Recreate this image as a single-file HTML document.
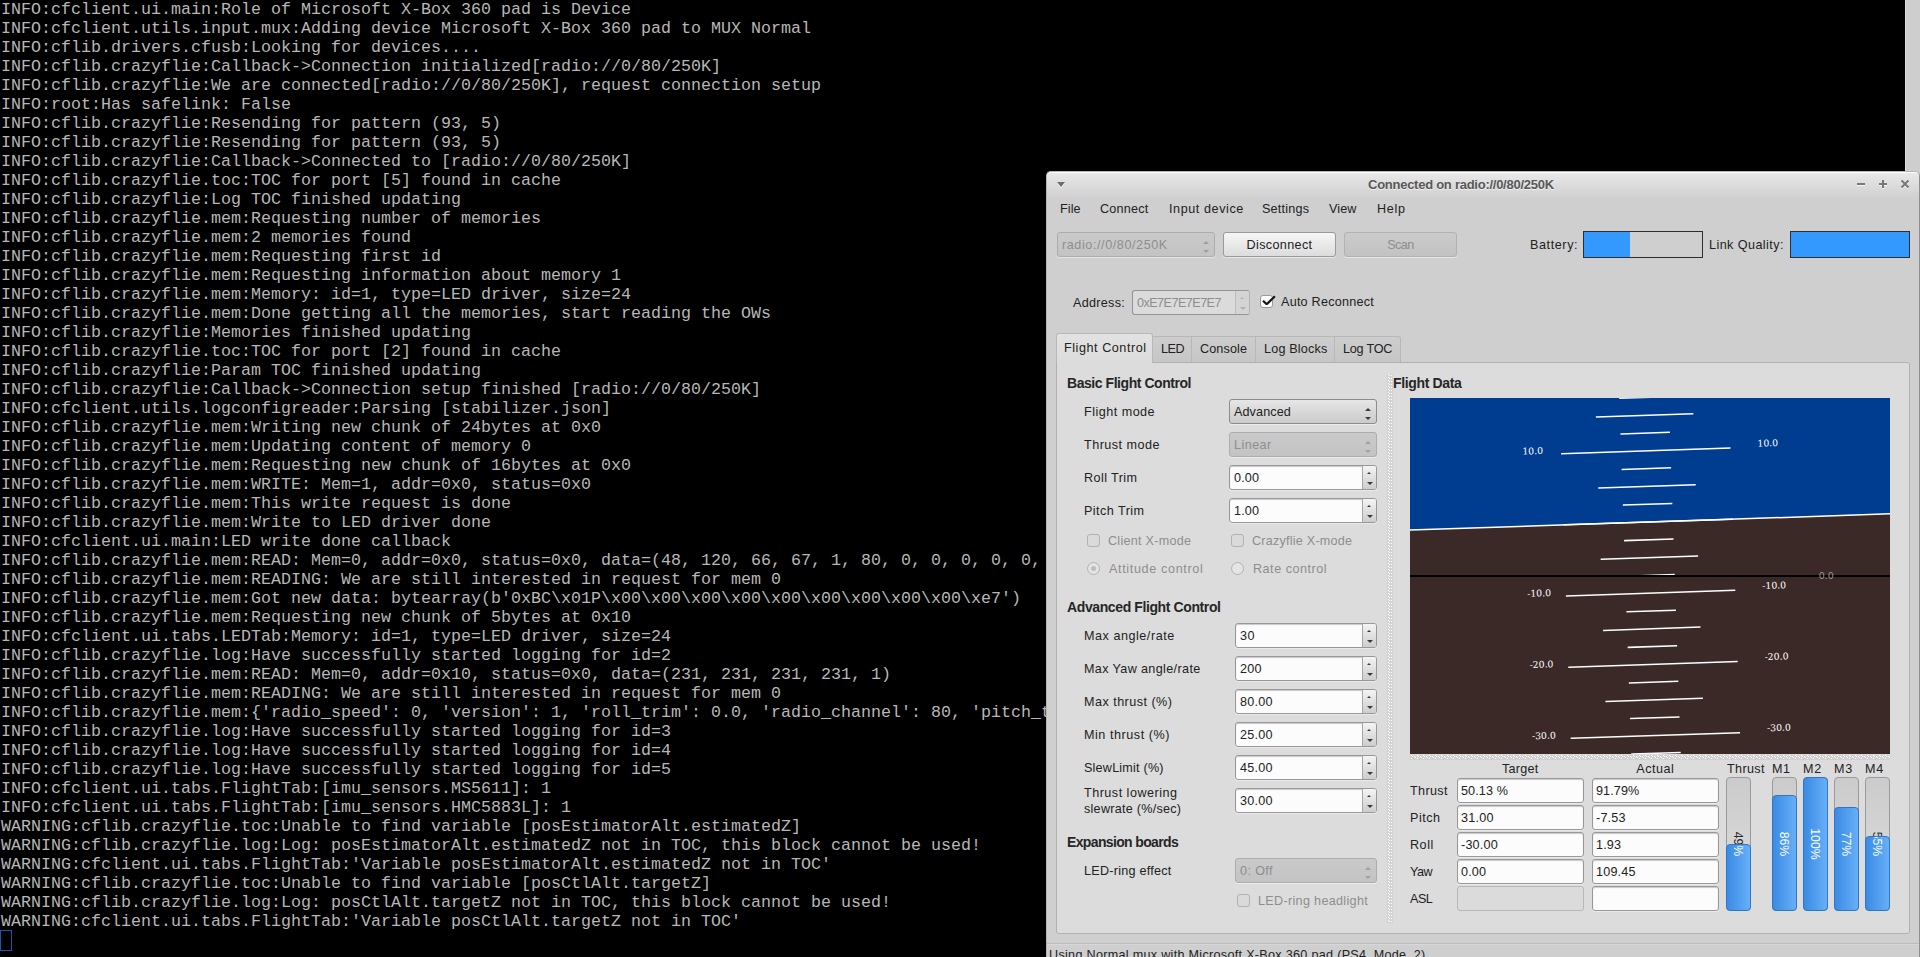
<!DOCTYPE html>
<html><head><meta charset="utf-8"><title>cfclient</title>
<style>
*{box-sizing:border-box;margin:0;padding:0}
html,body{width:1920px;height:957px;overflow:hidden;background:#000}
body{position:relative;font-family:"Liberation Sans",sans-serif;font-size:12.6px;letter-spacing:.4px;color:#222}
#term{position:absolute;left:0;top:0;width:1905px;height:957px;background:#000;overflow:hidden;letter-spacing:.004px;
 font-family:"Liberation Mono",monospace;font-size:16.667px;line-height:19px;color:#b7b7b7;white-space:pre}
#term pre{position:absolute;left:1px;top:0px;font:inherit;line-height:inherit}
#cursor{position:absolute;left:0;top:930px;width:12px;height:21px;border:1px solid #1757b0}
#tscroll{position:absolute;left:1905px;top:0;width:15px;height:957px;background:#cecece;border-left:1px solid #e0e0e0}
#win{position:absolute;left:1046px;top:171px;width:874px;height:800px;background:#cfcfcf;border:1px solid #b4b4b4;border-right-color:#8f8f8f;border-radius:5px 5px 0 0;overflow:hidden}
.a{position:absolute;white-space:nowrap}
.t{position:absolute;white-space:nowrap;line-height:16px;height:16px}
.b{font-weight:bold;font-size:14px;letter-spacing:-.4px;color:#262626}
.dis{color:#8e8e8e}
#title{position:absolute;left:0;top:0;width:100%;height:27px;background:linear-gradient(#e9e9e9,#cfcfcf);box-shadow:inset 0 1px 0 #fff;border-radius:4px 4px 0 0}
.btn{position:absolute;border:1px solid #9a9a9a;border-radius:3px;background:linear-gradient(#f6f6f6,#dcdcdc);box-shadow:0 1px 0 rgba(255,255,255,.5);text-align:center}
.btn.d{background:linear-gradient(#cbcbcb,#c2c2c2);border-color:#b2b2b2;color:#8e8e8e}
.cmb{position:absolute;border:1px solid #8c8c8c;border-radius:3px;background:linear-gradient(#e6e6e6,#cbcbcb);box-shadow:0 1px 0 rgba(255,255,255,.45)}
.cmb.d{background:linear-gradient(#cacaca,#c3c3c3);border-color:#adadad;color:#8e8e8e}
.inp{position:absolute;border:1px solid #989898;border-radius:3px;background:#fcfcfc;box-shadow:inset 0 1px 1px rgba(0,0,0,.2),0 1px 0 rgba(255,255,255,.4)}
.inp.d{background:#dbdbdb;border-color:#b8b8b8;box-shadow:none;color:#8e8e8e}
.spb{position:absolute;right:0;top:0;bottom:0;width:14px;border-left:1px solid #a6a6a6;border-radius:0 2px 2px 0;background:linear-gradient(#f4f4f4,#cdcdcd)}
.tri{position:absolute;width:0;height:0;border-left:3px solid transparent;border-right:3px solid transparent}
.chk{position:absolute;width:13px;height:13px;border:1px solid #b2b2b2;border-radius:3px;background:#dadada}
.rad{position:absolute;width:13px;height:13px;border:1px solid #b2b2b2;border-radius:7px;background:#e4e4e4}
.tab{position:absolute;border:1px solid #b8b8b8;border-bottom:none;background:linear-gradient(#cdcdcd,#c6c6c6)}
</style></head>
<body>
<div id="term"><pre>INFO:cfclient.ui.main:Role of Microsoft X-Box 360 pad is Device
INFO:cfclient.utils.input.mux:Adding device Microsoft X-Box 360 pad to MUX Normal
INFO:cflib.drivers.cfusb:Looking for devices....
INFO:cflib.crazyflie:Callback-&gt;Connection initialized[radio://0/80/250K]
INFO:cflib.crazyflie:We are connected[radio://0/80/250K], request connection setup
INFO:root:Has safelink: False
INFO:cflib.crazyflie:Resending for pattern (93, 5)
INFO:cflib.crazyflie:Resending for pattern (93, 5)
INFO:cflib.crazyflie:Callback-&gt;Connected to [radio://0/80/250K]
INFO:cflib.crazyflie.toc:TOC for port [5] found in cache
INFO:cflib.crazyflie:Log TOC finished updating
INFO:cflib.crazyflie.mem:Requesting number of memories
INFO:cflib.crazyflie.mem:2 memories found
INFO:cflib.crazyflie.mem:Requesting first id
INFO:cflib.crazyflie.mem:Requesting information about memory 1
INFO:cflib.crazyflie.mem:Memory: id=1, type=LED driver, size=24
INFO:cflib.crazyflie.mem:Done getting all the memories, start reading the OWs
INFO:cflib.crazyflie:Memories finished updating
INFO:cflib.crazyflie.toc:TOC for port [2] found in cache
INFO:cflib.crazyflie:Param TOC finished updating
INFO:cflib.crazyflie:Callback-&gt;Connection setup finished [radio://0/80/250K]
INFO:cfclient.utils.logconfigreader:Parsing [stabilizer.json]
INFO:cflib.crazyflie.mem:Writing new chunk of 24bytes at 0x0
INFO:cflib.crazyflie.mem:Updating content of memory 0
INFO:cflib.crazyflie.mem:Requesting new chunk of 16bytes at 0x0
INFO:cflib.crazyflie.mem:WRITE: Mem=1, addr=0x0, status=0x0
INFO:cflib.crazyflie.mem:This write request is done
INFO:cflib.crazyflie.mem:Write to LED driver done
INFO:cfclient.ui.main:LED write done callback
INFO:cflib.crazyflie.mem:READ: Mem=0, addr=0x0, status=0x0, data=(48, 120, 66, 67, 1, 80, 0, 0, 0, 0, 0, 0, 0, 0, 0, 0)
INFO:cflib.crazyflie.mem:READING: We are still interested in request for mem 0
INFO:cflib.crazyflie.mem:Got new data: bytearray(b&#x27;0xBC\x01P\x00\x00\x00\x00\x00\x00\x00\x00\x00\xe7&#x27;)
INFO:cflib.crazyflie.mem:Requesting new chunk of 5bytes at 0x10
INFO:cfclient.ui.tabs.LEDTab:Memory: id=1, type=LED driver, size=24
INFO:cflib.crazyflie.log:Have successfully started logging for id=2
INFO:cflib.crazyflie.mem:READ: Mem=0, addr=0x10, status=0x0, data=(231, 231, 231, 231, 1)
INFO:cflib.crazyflie.mem:READING: We are still interested in request for mem 0
INFO:cflib.crazyflie.mem:{&#x27;radio_speed&#x27;: 0, &#x27;version&#x27;: 1, &#x27;roll_trim&#x27;: 0.0, &#x27;radio_channel&#x27;: 80, &#x27;pitch_trim&#x27;: 0.0}
INFO:cflib.crazyflie.log:Have successfully started logging for id=3
INFO:cflib.crazyflie.log:Have successfully started logging for id=4
INFO:cflib.crazyflie.log:Have successfully started logging for id=5
INFO:cfclient.ui.tabs.FlightTab:[imu_sensors.MS5611]: 1
INFO:cfclient.ui.tabs.FlightTab:[imu_sensors.HMC5883L]: 1
WARNING:cflib.crazyflie.toc:Unable to find variable [posEstimatorAlt.estimatedZ]
WARNING:cflib.crazyflie.log:Log: posEstimatorAlt.estimatedZ not in TOC, this block cannot be used!
WARNING:cfclient.ui.tabs.FlightTab:&#x27;Variable posEstimatorAlt.estimatedZ not in TOC&#x27;
WARNING:cflib.crazyflie.toc:Unable to find variable [posCtlAlt.targetZ]
WARNING:cflib.crazyflie.log:Log: posCtlAlt.targetZ not in TOC, this block cannot be used!
WARNING:cfclient.ui.tabs.FlightTab:&#x27;Variable posCtlAlt.targetZ not in TOC&#x27;</pre><div id="cursor"></div></div>
<div id="tscroll"></div>
<div id="win">
<div id="title"></div>
<div class="a" style="left:10px;top:10px;width:0;height:0;border-left:4px solid transparent;border-right:4px solid transparent;border-top:5px solid #6e6e6e;filter:drop-shadow(0 1px 0 rgba(255,255,255,.8))"></div>
<div class="t" id="ttl" style="left:321px;top:5px;font-weight:bold;font-size:13px;letter-spacing:-.26px;color:#585858;text-shadow:0 1px 0 rgba(255,255,255,.6)">Connected on radio://0/80/250K</div>
<svg class="a" style="left:809px;top:5px" width="60" height="14" viewBox="0 0 60 14"><g stroke="#787878" stroke-width="2" fill="none" style="filter:drop-shadow(0 1px 0 rgba(255,255,255,.7))"><path d="M1 7h8"/><path d="M23 7h8M27 3v8"/><path d="M45.5 3.5l7 7M52.5 3.5l-7 7"/></g></svg>
<div class="t " style="left:13px;top:29px;letter-spacing:0.07px;">File</div>
<div class="t " style="left:53px;top:29px;letter-spacing:0.22px;">Connect</div>
<div class="t " style="left:122px;top:29px;letter-spacing:0.58px;">Input device</div>
<div class="t " style="left:215px;top:29px;letter-spacing:0.22px;">Settings</div>
<div class="t " style="left:282px;top:29px;letter-spacing:0.09px;">View</div>
<div class="t " style="left:330px;top:29px;letter-spacing:0.7px;">Help</div>
<div class="cmb d" style="left:10px;top:60px;width:158px;height:25px">
<div class="t" style="left:4px;top:4px;letter-spacing:0.58px;">radio://0/80/250K</div>
<div class="tri" style="right:5px;top:8px;border-bottom:3px solid #a0a0a0"></div>
<div class="tri" style="right:5px;top:17px;border-top:3px solid #a0a0a0"></div>
</div>
<div class="btn " style="left:176px;top:60px;width:113px;height:25px"><div class="t" style="left:0;width:100%;top:4px;text-align:center;letter-spacing:0.36px;">Disconnect</div></div>
<div class="btn d" style="left:297px;top:60px;width:113px;height:25px"><div class="t" style="left:0;width:100%;top:4px;text-align:center;letter-spacing:-0.5px;">Scan</div></div>
<div class="t " style="left:483px;top:65px;letter-spacing:0.59px;">Battery:</div>
<div class="a" style="left:536px;top:59px;width:120px;height:27px;border:1px solid #2e2e2e;background:#cfcfcf"><div style="width:46px;height:100%;background:#3399ff"></div></div>
<div class="t " style="left:662px;top:65px;letter-spacing:0.43px;">Link Quality:</div>
<div class="a" style="left:743px;top:59px;width:120px;height:27px;border:1px solid #2e2e2e;background:#3399ff"></div>
<div class="t " style="left:26px;top:123px;letter-spacing:0.29px;">Address:</div>
<div class="inp d" style="left:85px;top:118px;width:118px;height:25px;border-color:#949494 #b4b4b4 #949494 #949494">
<div class="t" style="left:4px;top:4px;letter-spacing:-0.53px;">0xE7E7E7E7E7</div>
<div class="spb" style="background:#d4d4d4;border-color:#bcbcbc">
<div class="tri" style="left:4px;top:6px;border-left-width:2px;border-right-width:2px;border-bottom:2px solid #b0b0b0"></div>
<div class="tri" style="left:3.5px;top:16px;border-top:3px solid #b0b0b0"></div>
</div></div>
<div class="chk" style="left:213px;top:123px;background:#fcfcfc;border-color:#9a9a9a"></div>
<svg class="a" style="left:213.5px;top:122.5px" width="16" height="14" viewBox="0 0 16 14"><path d="M2 5.7L5.7 9.3L13.9 1.3" stroke="#161616" stroke-width="2.2" stroke-linejoin="bevel" fill="none"/></svg>
<div class="t " style="left:234px;top:122px;letter-spacing:0.24px;">Auto Reconnect</div>
<div class="a" id="pane" style="left:9px;top:190px;width:854px;height:572px;border:1px solid #b1b1b1;border-radius:0 3px 3px 3px;background:#dcdcdc"></div>
<div class="tab" style="left:105px;top:164px;width:40px;height:26px;border-radius:0"></div>
<div class="t " style="left:114px;top:169px;letter-spacing:-0.5px;">LED</div>
<div class="tab" style="left:144px;top:164px;width:65px;height:26px;border-radius:0"></div>
<div class="t " style="left:153px;top:169px;letter-spacing:0.13px;">Console</div>
<div class="tab" style="left:208px;top:164px;width:80px;height:26px;border-radius:0"></div>
<div class="t " style="left:217px;top:169px;letter-spacing:0.19px;">Log Blocks</div>
<div class="tab" style="left:287px;top:164px;width:67px;height:26px;border-radius:0 3px 0 0"></div>
<div class="t " style="left:296px;top:169px;letter-spacing:-0.2px;">Log TOC</div>
<div class="tab" style="left:9px;top:161px;width:97px;height:30px;background:linear-gradient(#e2e2e2,#dcdcdc);border-radius:3px 3px 0 0"></div>
<div class="t " style="left:17px;top:168px;letter-spacing:0.55px;">Flight Control</div>
<div class="t b" style="left:20px;top:203px;letter-spacing:-0.45px;">Basic Flight Control</div>
<div class="t " style="left:37px;top:232px;letter-spacing:0.48px;">Flight mode</div>
<div class="cmb " style="left:182px;top:227px;width:148px;height:25px">
<div class="t" style="left:4px;top:4px;letter-spacing:0.11px;">Advanced</div>
<div class="tri" style="right:5px;top:8px;border-bottom:3px solid #3a3a3a"></div>
<div class="tri" style="right:5px;top:17px;border-top:3px solid #3a3a3a"></div>
</div>
<div class="t " style="left:37px;top:265px;letter-spacing:0.48px;">Thrust mode</div>
<div class="cmb d" style="left:182px;top:260px;width:148px;height:25px">
<div class="t" style="left:4px;top:4px;letter-spacing:0.44px;">Linear</div>
<div class="tri" style="right:5px;top:8px;border-bottom:3px solid #a0a0a0"></div>
<div class="tri" style="right:5px;top:17px;border-top:3px solid #a0a0a0"></div>
</div>
<div class="t " style="left:37px;top:298px;letter-spacing:0.42px;">Roll Trim</div>
<div class="inp " style="left:182px;top:293px;width:148px;height:25px;">
<div class="t" style="left:4px;top:4px;letter-spacing:0.16px;">0.00</div>
<div class="spb" style="">
<div class="tri" style="left:4px;top:6px;border-left-width:2px;border-right-width:2px;border-bottom:2px solid #3a3a3a"></div>
<div class="tri" style="left:3.5px;top:16px;border-top:3px solid #3a3a3a"></div>
</div></div>
<div class="t " style="left:37px;top:331px;letter-spacing:0.45px;">Pitch Trim</div>
<div class="inp " style="left:182px;top:326px;width:148px;height:25px;">
<div class="t" style="left:4px;top:4px;letter-spacing:0.16px;">1.00</div>
<div class="spb" style="">
<div class="tri" style="left:4px;top:6px;border-left-width:2px;border-right-width:2px;border-bottom:2px solid #3a3a3a"></div>
<div class="tri" style="left:3.5px;top:16px;border-top:3px solid #3a3a3a"></div>
</div></div>
<div class="chk" style="left:40px;top:362px"></div>
<div class="t dis" style="left:61px;top:361px;letter-spacing:0.27px;">Client X-mode</div>
<div class="chk" style="left:184px;top:362px"></div>
<div class="t dis" style="left:205px;top:361px;letter-spacing:0.23px;">Crazyflie X-mode</div>
<div class="rad" style="left:40px;top:390px"><div style="position:absolute;left:3px;top:3px;width:5px;height:5px;border-radius:3px;background:#bcbcbc"></div></div>
<div class="t dis" style="left:62px;top:389px;letter-spacing:0.65px;">Attitude control</div>
<div class="rad" style="left:184px;top:390px"></div>
<div class="t dis" style="left:206px;top:389px;letter-spacing:0.51px;">Rate control</div>
<div class="t b" style="left:20px;top:427px;letter-spacing:-0.39px;">Advanced Flight Control</div>
<div class="t " style="left:37px;top:456px;letter-spacing:0.53px;">Max angle/rate</div>
<div class="inp " style="left:188px;top:451px;width:142px;height:25px;">
<div class="t" style="left:4px;top:4px;letter-spacing:0.5px;">30</div>
<div class="spb" style="">
<div class="tri" style="left:4px;top:6px;border-left-width:2px;border-right-width:2px;border-bottom:2px solid #3a3a3a"></div>
<div class="tri" style="left:3.5px;top:16px;border-top:3px solid #3a3a3a"></div>
</div></div>
<div class="t " style="left:37px;top:489px;letter-spacing:0.36px;">Max Yaw angle/rate</div>
<div class="inp " style="left:188px;top:484px;width:142px;height:25px;">
<div class="t" style="left:4px;top:4px;letter-spacing:0.25px;">200</div>
<div class="spb" style="">
<div class="tri" style="left:4px;top:6px;border-left-width:2px;border-right-width:2px;border-bottom:2px solid #3a3a3a"></div>
<div class="tri" style="left:3.5px;top:16px;border-top:3px solid #3a3a3a"></div>
</div></div>
<div class="t " style="left:37px;top:522px;letter-spacing:0.47px;">Max thrust (%)</div>
<div class="inp " style="left:188px;top:517px;width:142px;height:25px;">
<div class="t" style="left:4px;top:4px;letter-spacing:0.25px;">80.00</div>
<div class="spb" style="">
<div class="tri" style="left:4px;top:6px;border-left-width:2px;border-right-width:2px;border-bottom:2px solid #3a3a3a"></div>
<div class="tri" style="left:3.5px;top:16px;border-top:3px solid #3a3a3a"></div>
</div></div>
<div class="t " style="left:37px;top:555px;letter-spacing:0.54px;">Min thrust (%)</div>
<div class="inp " style="left:188px;top:550px;width:142px;height:25px;">
<div class="t" style="left:4px;top:4px;letter-spacing:0.25px;">25.00</div>
<div class="spb" style="">
<div class="tri" style="left:4px;top:6px;border-left-width:2px;border-right-width:2px;border-bottom:2px solid #3a3a3a"></div>
<div class="tri" style="left:3.5px;top:16px;border-top:3px solid #3a3a3a"></div>
</div></div>
<div class="t " style="left:37px;top:588px;letter-spacing:0.21px;">SlewLimit (%)</div>
<div class="inp " style="left:188px;top:583px;width:142px;height:25px;">
<div class="t" style="left:4px;top:4px;letter-spacing:0.25px;">45.00</div>
<div class="spb" style="">
<div class="tri" style="left:4px;top:6px;border-left-width:2px;border-right-width:2px;border-bottom:2px solid #3a3a3a"></div>
<div class="tri" style="left:3.5px;top:16px;border-top:3px solid #3a3a3a"></div>
</div></div>
<div class="t " style="left:37px;top:613px;letter-spacing:0.49px;">Thrust lowering</div>
<div class="t " style="left:37px;top:629px;letter-spacing:0.26px;">slewrate (%/sec)</div>
<div class="inp " style="left:188px;top:616px;width:142px;height:25px;">
<div class="t" style="left:4px;top:4px;letter-spacing:0.25px;">30.00</div>
<div class="spb" style="">
<div class="tri" style="left:4px;top:6px;border-left-width:2px;border-right-width:2px;border-bottom:2px solid #3a3a3a"></div>
<div class="tri" style="left:3.5px;top:16px;border-top:3px solid #3a3a3a"></div>
</div></div>
<div class="t b" style="left:20px;top:662px;letter-spacing:-0.64px;">Expansion boards</div>
<div class="t " style="left:37px;top:691px;letter-spacing:0.25px;">LED-ring effect</div>
<div class="cmb d" style="left:188px;top:686px;width:142px;height:25px">
<div class="t" style="left:4px;top:4px;letter-spacing:0.39px;">0: Off</div>
<div class="tri" style="right:5px;top:8px;border-bottom:3px solid #a0a0a0"></div>
<div class="tri" style="right:5px;top:17px;border-top:3px solid #a0a0a0"></div>
</div>
<div class="chk" style="left:190px;top:722px"></div>
<div class="t dis" style="left:211px;top:721px;letter-spacing:0.32px;">LED-ring headlight</div>
<svg class="a" style="left:340px;top:202px" width="6" height="549"><defs><pattern id="hv" width="6" height="3" patternUnits="userSpaceOnUse"><rect width="6" height="3" fill="#d3d3d3"/><rect x="1" y="0" width="1" height="1" fill="#fff"/><rect x="2" y="1" width="1" height="1" fill="#fff"/><rect x="4" y="1" width="1" height="1" fill="#fff"/></pattern></defs><rect width="6" height="549" fill="url(#hv)"/></svg>
<div class="t b" style="left:346px;top:203px;letter-spacing:-0.35px;">Flight Data</div>
<svg class="a" style="left:363px;top:226px" width="480" height="356" viewBox="0 0 480 356">
<g transform="translate(240.0,178.0) rotate(-1.93) translate(0,-54.01) translate(-240.0,-178.0)">
<rect x="-480" y="-890" width="1440" height="1068" fill="rgb(0,61,144)"/>
<rect x="-480" y="178" width="1440" height="1068" fill="rgb(59,41,39)"/>
<g stroke="#fff" stroke-width="1.5" stroke-linecap="square">
<line x1="-480" y1="178.0" x2="1440" y2="178.0"/>
<line x1="216.0" y1="-53.4" x2="264.0" y2="-53.4"/>
<line x1="156.0" y1="-35.6" x2="324.0" y2="-35.6"/>
<line x1="216.0" y1="-17.8" x2="264.0" y2="-17.8"/>
<line x1="192.0" y1="0.0" x2="288.0" y2="0.0"/>
<line x1="216.0" y1="17.8" x2="264.0" y2="17.8"/>
<line x1="156.0" y1="35.6" x2="324.0" y2="35.6"/>
<line x1="216.0" y1="53.4" x2="264.0" y2="53.4"/>
<line x1="192.0" y1="71.2" x2="288.0" y2="71.2"/>
<line x1="216.0" y1="89.0" x2="264.0" y2="89.0"/>
<line x1="156.0" y1="106.8" x2="324.0" y2="106.8"/>
<line x1="216.0" y1="124.6" x2="264.0" y2="124.6"/>
<line x1="192.0" y1="142.4" x2="288.0" y2="142.4"/>
<line x1="216.0" y1="160.2" x2="264.0" y2="160.2"/>
<line x1="156.0" y1="178.0" x2="324.0" y2="178.0"/>
<line x1="216.0" y1="195.8" x2="264.0" y2="195.8"/>
<line x1="192.0" y1="213.6" x2="288.0" y2="213.6"/>
<line x1="216.0" y1="231.4" x2="264.0" y2="231.4"/>
<line x1="156.0" y1="249.2" x2="324.0" y2="249.2"/>
<line x1="216.0" y1="267.0" x2="264.0" y2="267.0"/>
<line x1="192.0" y1="284.8" x2="288.0" y2="284.8"/>
<line x1="216.0" y1="302.6" x2="264.0" y2="302.6"/>
<line x1="156.0" y1="320.4" x2="324.0" y2="320.4"/>
<line x1="216.0" y1="338.2" x2="264.0" y2="338.2"/>
<line x1="192.0" y1="356.0" x2="288.0" y2="356.0"/>
<line x1="216.0" y1="373.8" x2="264.0" y2="373.8"/>
<line x1="156.0" y1="391.6" x2="324.0" y2="391.6"/>
<line x1="216.0" y1="409.4" x2="264.0" y2="409.4"/>
<line x1="192.0" y1="427.2" x2="288.0" y2="427.2"/>
<line x1="216.0" y1="445.0" x2="264.0" y2="445.0"/>
<line x1="156.0" y1="462.8" x2="324.0" y2="462.8"/>
</g>
<g fill="#fff" font-family="DejaVu Serif, Liberation Serif, serif" font-size="9.33" letter-spacing="0" transform="translate(-1,-0.4)">
<text x="352.8" y="-35.6">30.0</text>
<text x="117.6" y="-35.6">30.0</text>
<text x="352.8" y="35.6">20.0</text>
<text x="117.6" y="35.6">20.0</text>
<text x="352.8" y="106.8">10.0</text>
<text x="117.6" y="106.8">10.0</text>
<text x="352.8" y="249.2">-10.0</text>
<text x="117.6" y="249.2">-10.0</text>
<text x="352.8" y="320.4">-20.0</text>
<text x="117.6" y="320.4">-20.0</text>
<text x="352.8" y="391.6">-30.0</text>
<text x="117.6" y="391.6">-30.0</text>
<text x="352.8" y="462.8">-40.0</text>
<text x="117.6" y="462.8">-40.0</text>
</g></g>
<line x1="0" y1="178.0" x2="480" y2="178.0" stroke="#000" stroke-width="2"/>
<text x="408.8" y="180.86" fill="#9d9593" font-family="DejaVu Sans, Liberation Sans, sans-serif" font-size="9.5" letter-spacing="0">0.0</text>
</svg>
<svg class="a" style="left:363px;top:583px" width="480" height="5"><defs><pattern id="hh" width="6" height="5" patternUnits="userSpaceOnUse"><rect width="6" height="5" fill="#d1d1d1"/><rect x="1" y="0" width="1" height="1" fill="#fff"/><rect x="2" y="1" width="1" height="1" fill="#fff"/><rect x="4" y="1" width="1" height="1" fill="#fff"/><rect x="5" y="2" width="1" height="1" fill="#fff"/><rect x="1" y="3" width="1" height="1" fill="#fff"/></pattern></defs><rect width="480" height="5" fill="url(#hh)"/></svg>
<div class="t " style="left:373.3px;top:589px;width:200px;text-align:center;letter-spacing:0.25px;">Target</div>
<div class="t " style="left:508.3px;top:589px;width:200px;text-align:center;letter-spacing:0.51px;">Actual</div>
<div class="t " style="left:680px;top:589px;letter-spacing:0.36px;">Thrust</div>
<div class="t " style="left:725px;top:589px;letter-spacing:0.51px;">M1</div>
<div class="t " style="left:756px;top:589px;letter-spacing:0.8px;">M2</div>
<div class="t " style="left:787px;top:589px;letter-spacing:0.8px;">M3</div>
<div class="t " style="left:818px;top:589px;letter-spacing:0.8px;">M4</div>
<div class="t " style="left:363px;top:611px;letter-spacing:0.36px;">Thrust</div>
<div class="inp " style="left:410px;top:606px;width:127px;height:25px">
<div class="t" style="left:3px;top:4px;letter-spacing:0.12px;">50.13 %</div>
</div>
<div class="inp " style="left:545px;top:606px;width:127px;height:25px">
<div class="t" style="left:3px;top:4px;letter-spacing:0.1px;">91.79%</div>
</div>
<div class="t " style="left:363px;top:638px;letter-spacing:0.5px;">Pitch</div>
<div class="inp " style="left:410px;top:633px;width:127px;height:25px">
<div class="t" style="left:3px;top:4px;letter-spacing:0.25px;">31.00</div>
</div>
<div class="inp " style="left:545px;top:633px;width:127px;height:25px">
<div class="t" style="left:3px;top:4px;letter-spacing:0.2px;">-7.53</div>
</div>
<div class="t " style="left:363px;top:665px;letter-spacing:0.53px;">Roll</div>
<div class="inp " style="left:410px;top:660px;width:127px;height:25px">
<div class="t" style="left:3px;top:4px;letter-spacing:0.21px;">-30.00</div>
</div>
<div class="inp " style="left:545px;top:660px;width:127px;height:25px">
<div class="t" style="left:3px;top:4px;letter-spacing:0.16px;">1.93</div>
</div>
<div class="t " style="left:363px;top:692px;letter-spacing:-0.5px;">Yaw</div>
<div class="inp " style="left:410px;top:687px;width:127px;height:25px">
<div class="t" style="left:3px;top:4px;letter-spacing:0.16px;">0.00</div>
</div>
<div class="inp " style="left:545px;top:687px;width:127px;height:25px">
<div class="t" style="left:3px;top:4px;letter-spacing:0.2px;">109.45</div>
</div>
<div class="t " style="left:363px;top:719px;letter-spacing:-0.5px;">ASL</div>
<div class="inp d" style="left:410px;top:714px;width:127px;height:25px">
</div>
<div class="inp " style="left:545px;top:714px;width:127px;height:25px">
</div>
<div class="a" style="left:679px;top:605px;width:25px;height:134px;border:1px solid #9a9a9a;border-radius:4px;background:linear-gradient(#cbcbcb,#e0e0e0)"></div>
<div class="a" style="left:679px;top:605px;width:25px;height:134px;overflow:hidden"><div class="a" style="left:11.5px;top:67.0px;transform:translate(-50%,-50%) rotate(90deg);font-size:12.3px;letter-spacing:0;line-height:16px;color:#2a2a2a">49%</div></div>
<div class="a" style="left:679px;top:672px;width:25px;height:67px;border:1px solid #2f76c6;border-radius:4px;background:linear-gradient(90deg,#3b8be4,#66aff9);overflow:hidden">
<div class="a" style="left:10.5px;top:-1.0px;transform:translate(-50%,-50%) rotate(90deg);font-size:12.3px;letter-spacing:0;line-height:16px;color:#fff">49%</div>
</div>
<div class="a" style="left:725px;top:605px;width:25px;height:134px;border:1px solid #9a9a9a;border-radius:4px;background:linear-gradient(#cbcbcb,#e0e0e0)"></div>
<div class="a" style="left:725px;top:605px;width:25px;height:134px;overflow:hidden"><div class="a" style="left:11.5px;top:67.0px;transform:translate(-50%,-50%) rotate(90deg);font-size:12.3px;letter-spacing:0;line-height:16px;color:#2a2a2a">86%</div></div>
<div class="a" style="left:725px;top:623px;width:25px;height:116px;border:1px solid #2f76c6;border-radius:4px;background:linear-gradient(90deg,#3b8be4,#66aff9);overflow:hidden">
<div class="a" style="left:10.5px;top:48.0px;transform:translate(-50%,-50%) rotate(90deg);font-size:12.3px;letter-spacing:0;line-height:16px;color:#fff">86%</div>
</div>
<div class="a" style="left:756px;top:605px;width:25px;height:134px;border:1px solid #9a9a9a;border-radius:4px;background:linear-gradient(#cbcbcb,#e0e0e0)"></div>
<div class="a" style="left:756px;top:605px;width:25px;height:134px;overflow:hidden"><div class="a" style="left:11.5px;top:67.0px;transform:translate(-50%,-50%) rotate(90deg);font-size:12.3px;letter-spacing:0;line-height:16px;color:#2a2a2a">100%</div></div>
<div class="a" style="left:756px;top:605px;width:25px;height:134px;border:1px solid #2f76c6;border-radius:4px;background:linear-gradient(90deg,#3b8be4,#66aff9);overflow:hidden">
<div class="a" style="left:10.5px;top:66.0px;transform:translate(-50%,-50%) rotate(90deg);font-size:12.3px;letter-spacing:0;line-height:16px;color:#fff">100%</div>
</div>
<div class="a" style="left:787px;top:605px;width:25px;height:134px;border:1px solid #9a9a9a;border-radius:4px;background:linear-gradient(#cbcbcb,#e0e0e0)"></div>
<div class="a" style="left:787px;top:605px;width:25px;height:134px;overflow:hidden"><div class="a" style="left:11.5px;top:67.0px;transform:translate(-50%,-50%) rotate(90deg);font-size:12.3px;letter-spacing:0;line-height:16px;color:#2a2a2a">77%</div></div>
<div class="a" style="left:787px;top:635px;width:25px;height:104px;border:1px solid #2f76c6;border-radius:4px;background:linear-gradient(90deg,#3b8be4,#66aff9);overflow:hidden">
<div class="a" style="left:10.5px;top:36.0px;transform:translate(-50%,-50%) rotate(90deg);font-size:12.3px;letter-spacing:0;line-height:16px;color:#fff">77%</div>
</div>
<div class="a" style="left:818px;top:605px;width:25px;height:134px;border:1px solid #9a9a9a;border-radius:4px;background:linear-gradient(#cbcbcb,#e0e0e0)"></div>
<div class="a" style="left:818px;top:605px;width:25px;height:134px;overflow:hidden"><div class="a" style="left:11.5px;top:67.0px;transform:translate(-50%,-50%) rotate(90deg);font-size:12.3px;letter-spacing:0;line-height:16px;color:#2a2a2a">55%</div></div>
<div class="a" style="left:818px;top:664px;width:25px;height:75px;border:1px solid #2f76c6;border-radius:4px;background:linear-gradient(90deg,#3b8be4,#66aff9);overflow:hidden">
<div class="a" style="left:10.5px;top:7.0px;transform:translate(-50%,-50%) rotate(90deg);font-size:12.3px;letter-spacing:0;line-height:16px;color:#fff">55%</div>
</div>
<div class="a" style="left:0;top:771px;width:873px;height:1px;background:#bcbcbc"></div>
<div class="a" style="left:0;top:772px;width:873px;height:1px;background:#d7d7d7"></div>
<div class="t " style="left:2px;top:775px;letter-spacing:0.3px;">Using Normal mux with Microsoft X-Box 360 pad (PS4_Mode_2)</div>
</div>
</body></html>
